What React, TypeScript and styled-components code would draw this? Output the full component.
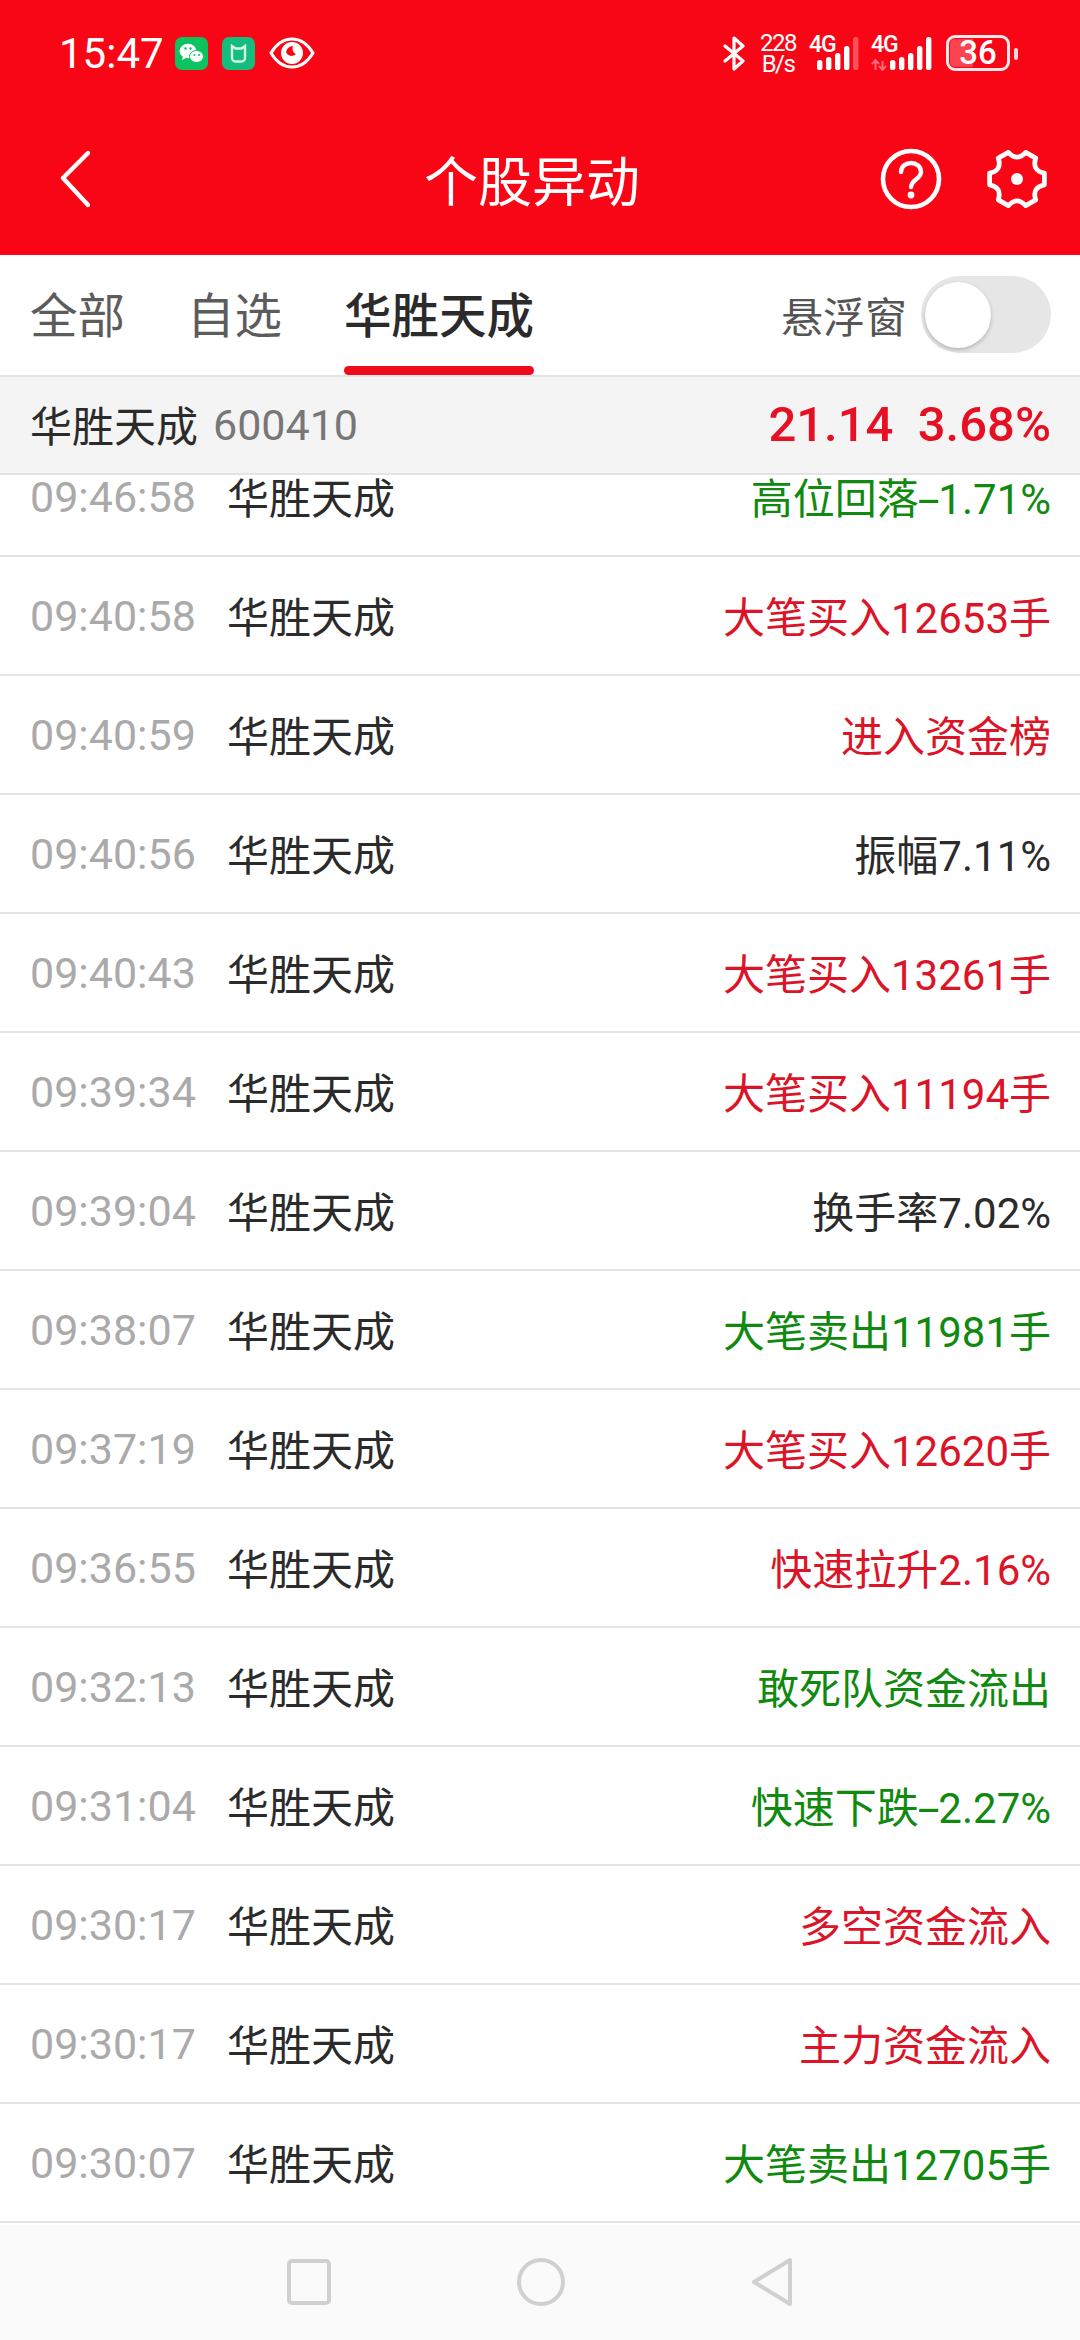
import React from "react";
import styled, { createGlobalStyle } from "styled-components";

const Global = createGlobalStyle`
  html, body { margin: 0; padding: 0; background: #fff; }
  body { font-family: Roboto, "Noto Sans CJK SC", sans-serif; }
  * { box-sizing: border-box; }
`;

const Page = styled.div`
  width: 1080px;
  height: 2340px;
  display: flex;
  flex-direction: column;
  overflow: hidden;
  background: #fff;
`;

const Header = styled.header`
  height: 255px;
  background: #f90616;
  color: #fff;
  flex: none;
  display: flex;
  flex-direction: column;
`;

const StatusBar = styled.div`
  height: 107px;
  padding: 33px 70px 0 59px;
  display: flex;
  align-items: flex-start;
`;

const Clock = styled.span`
  font-size: 42px;
  line-height: 42px;
  width: 116px;
  flex: none;
  font-family: Roboto, sans-serif;
`;

const NoteIcons = styled.div`
  display: flex;
  align-items: center;
  gap: 14px;
  height: 36px;
  margin-top: 2px;
`;

const Spacer = styled.div`
  flex: 1;
`;

const SysIcons = styled.div`
  display: flex;
  align-items: flex-start;
  margin-top: 2px;
`;

const Speed = styled.div`
  width: 40px;
  margin: -2px 11px 0 12px;
  font-size: 24px;
  text-align: center;
  font-family: Roboto, sans-serif;
  letter-spacing: -1.5px;
`;

const SpeedLine = styled.div`
  height: 20.5px;
  line-height: 20.5px;
`;

const Signal = styled.div<{ $wide?: boolean }>`
  position: relative;
  flex: none;
  width: ${(p) => (p.$wide ? 62 : 50)}px;
  height: 36px;
  margin-right: ${(p) => (p.$wide ? 13 : 12)}px;
`;

const SignalLabel = styled.span`
  position: absolute;
  left: 0;
  top: 0;
  font-size: 23px;
  line-height: 20px;
  font-weight: 500;
  font-family: Roboto, sans-serif;
  letter-spacing: -1px;
`;

const Battery = styled.div`
  position: relative;
  width: 64px;
  height: 36px;
  border: 3px solid rgba(255, 255, 255, 0.9);
  border-radius: 9px;
  text-align: center;
  font-size: 33px;
  line-height: 30px;
  font-weight: 500;
  font-family: Roboto, sans-serif;
  &::before {
    content: "";
    position: absolute;
    left: 1px;
    top: 1px;
    bottom: 1px;
    width: 23px;
    border-radius: 5px 0 0 5px;
    background: rgba(255, 255, 255, 0.25);
  }
  &::after {
    content: "";
    position: absolute;
    right: -11px;
    top: 10px;
    width: 4px;
    height: 12px;
    border-radius: 2px;
    background: rgba(255, 255, 255, 0.85);
  }
`;

const BatteryValue = styled.span`
  position: relative;
`;

const TitleBar = styled.div`
  position: relative;
  flex: 1;
  padding: 0 36px 0 60px;
  display: flex;
  align-items: center;
  justify-content: space-between;
  margin-top: -4px;
`;

const Title = styled.h1`
  position: absolute;
  left: 0;
  right: 16px;
  top: 50%;
  transform: translateY(-50%);
  margin: 0;
  text-align: center;
  font-size: 54px;
  line-height: 70px;
  font-weight: 400;
  font-family: "Noto Sans CJK SC", sans-serif;
`;

const TitleActions = styled.div`
  display: flex;
  align-items: center;
  gap: 44px;
  margin-right: -4px;
`;

const Tabs = styled.nav`
  height: 122px;
  flex: none;
  display: flex;
  align-items: stretch;
  padding: 0 29px 0 30px;
  border-bottom: 2px solid #e4e4e4;
`;

const Tab = styled.div<{ $active?: boolean }>`
  position: relative;
  display: flex;
  align-items: center;
  height: 120px;
  padding-bottom: 5px;
  margin-right: 62px;
  font-size: 47.5px;
  color: ${(p) => (p.$active ? "#2b2b2b" : "#5c5c5c")};
  font-weight: ${(p) => (p.$active ? 500 : 400)};
  font-family: "Noto Sans CJK SC", sans-serif;
  ${(p) =>
    p.$active &&
    `&::after {
      content: "";
      position: absolute;
      left: 0;
      right: 0;
      bottom: 0;
      height: 9px;
      border-radius: 5px;
      background: #f1091c;
    }`}
`;

const FloatOption = styled.div`
  margin-left: auto;
  display: flex;
  align-items: center;
  gap: 14px;
  padding-bottom: 2px;
  font-size: 42px;
  color: #555;
  font-family: "Noto Sans CJK SC", sans-serif;
`;

const Toggle = styled.div`
  position: relative;
  width: 130px;
  height: 77px;
  border-radius: 39px;
  background: #e6e6e6;
  &::after {
    content: "";
    position: absolute;
    left: 4px;
    top: 6px;
    width: 66px;
    height: 66px;
    border-radius: 50%;
    background: #fff;
    box-shadow: 0 2px 4px rgba(0, 0, 0, 0.22);
  }
`;

const StockBar = styled.div`
  height: 98px;
  flex: none;
  background: #f4f4f4;
  border-bottom: 2px solid #e4e4e4;
  padding: 0 29px 4px 30px;
  display: flex;
  align-items: center;
`;

const StockName = styled.span`
  font-size: 42px;
  color: #2b2b2b;
  font-family: "Noto Sans CJK SC", sans-serif;
`;

const StockCode = styled.span`
  font-size: 43px;
  color: #777;
  margin: 3px 0 0 15px;
`;

const StockQuote = styled.span`
  margin: 2px 0 0 auto;
  font-size: 49px;
  font-weight: 500;
  color: #e60f23;
  white-space: pre;
`;

const List = styled.div`
  flex: 1;
  min-height: 0;
  overflow: hidden;
`;

const Rows = styled.div`
  margin-top: -37px;
`;

const Row = styled.div`
  height: 119px;
  padding: 0 29px 2px 30px;
  border-bottom: 2px solid #e4e4e4;
  display: flex;
  align-items: center;
  font-size: 42px;
`;

const Time = styled.span`
  width: 197px;
  flex: none;
  color: #aaa;
  font-size: 43px;
  margin-top: 3px;
`;

const Name = styled.span`
  color: #2b2b2b;
  font-family: "Noto Sans CJK SC", sans-serif;
`;

const Event = styled.span<{ $tone: "up" | "down" | "flat" }>`
  margin-left: auto;
  color: ${(p) => (p.$tone === "up" ? "#dc1428" : p.$tone === "down" ? "#0f8a0f" : "#2b2b2b")};
`;

const Dash = styled.span`
  display: inline-block;
  margin: 0 4px;
  transform: scaleX(1.9);
`;

const NavBar = styled.div`
  height: 115px;
  flex: none;
  margin-top: -1px;
  background: #fafafa;
  display: flex;
  align-items: center;
  justify-content: center;
  gap: 186px;
  padding-bottom: 2px;
`;

const rows: [string, string, "up" | "down" | "flat"][] = [
  ["09:46:58", "高位回落-1.71%", "down"],
  ["09:40:58", "大笔买入12653手", "up"],
  ["09:40:59", "进入资金榜", "up"],
  ["09:40:56", "振幅7.11%", "flat"],
  ["09:40:43", "大笔买入13261手", "up"],
  ["09:39:34", "大笔买入11194手", "up"],
  ["09:39:04", "换手率7.02%", "flat"],
  ["09:38:07", "大笔卖出11981手", "down"],
  ["09:37:19", "大笔买入12620手", "up"],
  ["09:36:55", "快速拉升2.16%", "up"],
  ["09:32:13", "敢死队资金流出", "down"],
  ["09:31:04", "快速下跌-2.27%", "down"],
  ["09:30:17", "多空资金流入", "up"],
  ["09:30:17", "主力资金流入", "up"],
  ["09:30:07", "大笔卖出12705手", "down"],
];

const WeChat = () => (
  <svg width="33" height="33" viewBox="0 0 33 33">
    <rect width="33" height="33" rx="7" fill="#0cc35f" />
    <ellipse cx="13" cy="14" rx="8.5" ry="7.2" fill="#fff" />
    <path d="M8 19l-1 4 4-2z" fill="#fff" />
    <ellipse cx="21.5" cy="19.5" rx="7" ry="6" fill="#fff" stroke="#0cc35f" strokeWidth="1" />
    <circle cx="10.5" cy="11.5" r="1.2" fill="#0cc35f" />
    <circle cx="15.5" cy="11.5" r="1.2" fill="#0cc35f" />
    <circle cx="19.5" cy="18" r="1" fill="#0cc35f" />
    <circle cx="24" cy="18" r="1" fill="#0cc35f" />
  </svg>
);

const MiHome = () => (
  <svg width="33" height="33" viewBox="0 0 33 33">
    <rect width="33" height="33" rx="7" fill="#15bd7d" />
    <path
      d="M10 9l3.5 2.5h6L23 9v12a3.5 3.5 0 0 1-3.5 3.5h-6A3.5 3.5 0 0 1 10 21z"
      fill="none"
      stroke="#d4f7e8"
      strokeWidth="2.4"
    />
    <path d="M13 14h7v7h-7z" fill="#15bd7d" />
  </svg>
);

const Eye = () => (
  <svg width="46" height="32" viewBox="0 0 46 32">
    <path d="M2 16C8 6 15 2 23 2s15 4 21 14c-6 10-13 14-21 14S8 26 2 16z" fill="none" stroke="#fff" strokeWidth="3" />
    <circle cx="23" cy="16" r="11" fill="#fff" />
    <path d="M17 15a6 6 0 0 0 10 2 6 6 0 0 1-3-8 8 8 0 0 0-7 6z" fill="#f90616" />
  </svg>
);

const Bluetooth = () => (
  <svg width="24" height="36" viewBox="0 0 24 36" fill="none" stroke="#fff" strokeWidth="3.2" strokeLinejoin="round" strokeLinecap="round">
    <path d="M3 11l18 15-9 8V3l9 8L3 26" />
  </svg>
);

const barHeights = [10, 13, 17, 24, 33];

const Bars = ({ wide, dim }: { wide?: boolean; dim?: boolean }) => {
  const start = wide ? 19 : 8;
  return (
    <svg width={wide ? 62 : 50} height="36" viewBox={`0 0 ${wide ? 62 : 50} 36`} style={{ position: "absolute", left: 0, top: 0 }}>
      {wide && (
        <path d="M1 29l3.5-4 3.5 4M4.5 26v9M8 31l3.5 4 3.5-4M11.5 26v9" stroke="rgba(255,255,255,.4)" strokeWidth="2" fill="none" />
      )}
      {barHeights.map((h, i) => (
        <rect
          key={i}
          x={start + i * 9}
          y={35 - h}
          width="5.4"
          height={h}
          rx="2.6"
          fill={dim && i === 4 ? "rgba(255,255,255,.3)" : "#fff"}
        />
      ))}
    </svg>
  );
};

const Chevron = () => (
  <svg width="30" height="58" viewBox="0 0 30 58" fill="none" stroke="#fff" strokeWidth="4.4" strokeLinecap="round" strokeLinejoin="round">
    <path d="M28 3L3 28l25 27" />
  </svg>
);

const Help = () => (
  <svg width="62" height="62" viewBox="0 0 62 62" fill="none" stroke="#fff">
    <circle cx="31" cy="31" r="28" strokeWidth="4.6" />
    <path d="M21 24c0-6 5-9 10-9s10 3 10 9c0 7-9 7-10 15" strokeWidth="4.4" strokeLinecap="round" />
    <circle cx="31" cy="47" r="3.4" fill="#fff" stroke="none" />
  </svg>
);

const gearPoint = (deg: number, r: number) => {
  const a = (deg * Math.PI) / 180;
  return `${(31 + r * Math.cos(a)).toFixed(1)} ${(30 + r * Math.sin(a)).toFixed(1)}`;
};

const gearPath =
  [0, 60, 120, 180, 240, 300]
    .map((a, i) => {
      const start = `${i === 0 ? "M" : "L"}${gearPoint(a - 12, 28)}`;
      return `${start} L${gearPoint(a + 12, 28)} Q${gearPoint(a + 30, 17)} ${gearPoint(a + 48, 28)}`;
    })
    .join(" ") + " Z";

const Gear = () => (
  <svg width="62" height="60" viewBox="0 0 62 60" fill="none" stroke="#fff" strokeWidth="4.8" strokeLinejoin="round">
    <path d={gearPath} />
    <circle cx="31" cy="30" r="6" fill="#fff" stroke="none" />
  </svg>
);

const Square = () => (
  <svg width="44" height="46" viewBox="0 0 44 46" fill="none" stroke="#d0d0d0" strokeWidth="4">
    <rect x="2" y="2" width="40" height="42" rx="3" />
  </svg>
);

const Circle = () => (
  <svg width="48" height="48" viewBox="0 0 48 48" fill="none" stroke="#d0d0d0" strokeWidth="4">
    <circle cx="24" cy="24" r="22" />
  </svg>
);

const Triangle = () => (
  <svg width="42" height="50" viewBox="0 0 42 50" fill="none" stroke="#d0d0d0" strokeWidth="4" strokeLinejoin="round">
    <path d="M39 3v44L3 25z" />
  </svg>
);

const eventText = (text: string) => {
  const [head, tail] = text.split("-");
  return tail === undefined ? (
    text
  ) : (
    <>
      {head}
      <Dash>-</Dash>
      {tail}
    </>
  );
};

export default function App() {
  return (
    <Page>
      <Global />
      <Header>
        <StatusBar>
          <Clock>15:47</Clock>
          <NoteIcons>
            <WeChat />
            <MiHome />
            <Eye />
          </NoteIcons>
          <Spacer />
          <SysIcons>
            <Bluetooth />
            <Speed>
              <SpeedLine>228</SpeedLine>
              <SpeedLine>B/s</SpeedLine>
            </Speed>
            <Signal>
              <Bars dim />
              <SignalLabel>4G</SignalLabel>
            </Signal>
            <Signal $wide>
              <Bars wide />
              <SignalLabel>4G</SignalLabel>
            </Signal>
            <Battery>
              <BatteryValue>36</BatteryValue>
            </Battery>
          </SysIcons>
        </StatusBar>
        <TitleBar>
          <Chevron />
          <Title>个股异动</Title>
          <TitleActions>
            <Help />
            <Gear />
          </TitleActions>
        </TitleBar>
      </Header>
      <Tabs>
        <Tab>全部</Tab>
        <Tab>自选</Tab>
        <Tab $active>华胜天成</Tab>
        <FloatOption>
          悬浮窗
          <Toggle />
        </FloatOption>
      </Tabs>
      <StockBar>
        <StockName>华胜天成</StockName>
        <StockCode>600410</StockCode>
        <StockQuote>21.14  3.68%</StockQuote>
      </StockBar>
      <List>
        <Rows>
          {rows.map(([t, e, tone], i) => (
            <Row key={i}>
              <Time>{t}</Time>
              <Name>华胜天成</Name>
              <Event $tone={tone}>{eventText(e)}</Event>
            </Row>
          ))}
        </Rows>
      </List>
      <NavBar>
        <Square />
        <Circle />
        <Triangle />
      </NavBar>
    </Page>
  );
}
